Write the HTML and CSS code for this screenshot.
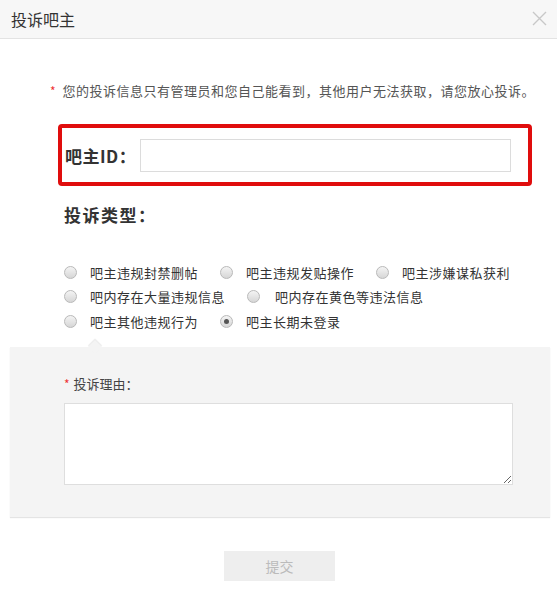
FILE: index.html
```html
<!DOCTYPE html>
<html lang="zh-CN">
<head>
<meta charset="utf-8">
<title>投诉吧主</title>
<link rel="stylesheet" href="styles.css">
</head>
<body>
<div class="dialog">
  <header class="dlg-head">
    <span class="dlg-title">投诉吧主</span>
    <span class="dlg-close" aria-label="关闭">
      <svg width="15" height="15" viewBox="0 0 15 15"><path d="M1 1 L14 14 M14 1 L1 14" stroke="#c8c8c8" stroke-width="1.4" fill="none"/></svg>
    </span>
  </header>

  <p class="notice"><span class="req">*</span>您的投诉信息只有管理员和您自己能看到，其他用户无法获取，请您放心投诉。</p>

  <div class="id-box">
    <label class="id-label">吧主ID：</label>
    <input class="id-input" type="text">
  </div>

  <h3 class="type-title">投诉类型：</h3>

  <ul class="radio-list">
    <li class="radio-item"><span class="radio"></span><span class="radio-text">吧主违规封禁删帖</span></li>
    <li class="radio-item"><span class="radio"></span><span class="radio-text">吧主违规发贴操作</span></li>
    <li class="radio-item"><span class="radio"></span><span class="radio-text">吧主涉嫌谋私获利</span></li>
    <li class="radio-item"><span class="radio"></span><span class="radio-text">吧内存在大量违规信息</span></li>
    <li class="radio-item"><span class="radio"></span><span class="radio-text wide">吧内存在黄色等违法信息</span></li>
    <li class="radio-item"><span class="radio"></span><span class="radio-text">吧主其他违规行为</span></li>
    <li class="radio-item"><span class="radio checked"></span><span class="radio-text">吧主长期未登录</span></li>
  </ul>

  <section class="reason-panel">
    <div class="reason-label"><span class="req">*</span>投诉理由：</div>
    <textarea class="reason-input"></textarea>
  </section>

  <div class="actions">
    <button class="submit" type="button">提交</button>
  </div>
</div>
</body>
</html>
```

FILE: styles.css
```css
html, body {
  margin: 0;
  padding: 0;
  background: #fff;
}

body {
  font-family: "Noto Sans CJK SC", "Microsoft YaHei", sans-serif;
  color: #333;
}

.dialog {
  width: 557px;
  height: 593px;
  overflow: hidden;
}

.dlg-head {
  height: 38px;
  background: #f7f7f7;
  border-bottom: 1px solid #e3e3e3;
  display: flex;
  align-items: center;
  justify-content: space-between;
  padding: 0 10px 0 11px;
}

.dlg-title {
  font-size: 16px;
  color: #333;
  line-height: 20px;
}

.dlg-close {
  display: flex;
  margin-top: -2px;
}

.notice {
  margin: 42px 0 0 50px;
  font-size: 13px;
  line-height: 20px;
  color: #555;
  letter-spacing: 0.5px;
}

.req {
  color: #e33;
  font-size: 12px;
  margin-right: 7px;
  letter-spacing: 0;
}

.id-box {
  margin: 23px 0 0 58px;
  width: 463px;
  height: 54px;
  border: 4px solid #e00d0d;
  border-radius: 4px;
  display: flex;
  align-items: center;
  padding-left: 3px;
}

.id-label {
  font-size: 17px;
  font-weight: bold;
  color: #333;
  width: 75px;
  letter-spacing: 0.5px;
}

.id-input {
  width: 369px;
  height: 31px;
  border: 1px solid #dcdcdc;
  margin: 0;
  padding: 0;
  outline: none;
}

.type-title {
  margin: 16px 0 0 64px;
  font-size: 17px;
  font-weight: bold;
  line-height: 26px;
  color: #333;
  letter-spacing: 1.5px;
}

.radio-list {
  list-style: none;
  margin: 32px 0 0 64px;
  padding: 0;
  width: 458px;
  display: flex;
  flex-wrap: wrap;
  column-gap: 22px;
}

.radio-item {
  display: flex;
  align-items: center;
  height: 24.5px;
  font-size: 13px;
  letter-spacing: 0.5px;
  color: #333;
}

.radio {
  width: 11px;
  height: 11px;
  border: 1px solid #b9b9b9;
  border-radius: 50%;
  background: linear-gradient(#f4f4f4, #d6d6d6);
  margin-right: 13px;
  position: relative;
}

.radio.checked::after {
  content: "";
  position: absolute;
  left: 3px;
  top: 3px;
  width: 5px;
  height: 5px;
  border-radius: 50%;
  background: #555;
}

.radio-text.wide {
  margin-left: 2px;
}

.reason-panel {
  margin: 13px 7px 0 10px;
  height: 170px;
  background: #f4f4f4;
  box-shadow: 0 1px 1px #e4e4e4;
  position: relative;
  padding: 27px 0 0 54px;
  box-sizing: border-box;
}

.reason-panel::before {
  content: "";
  position: absolute;
  left: 80px;
  top: -5px;
  width: 10px;
  height: 10px;
  background: #f4f4f4;
  transform: rotate(45deg);
  box-shadow: -1px -1px 1px #eaeaea;
}

.reason-label {
  font-size: 13px;
  line-height: 20px;
  color: #444;
}

.reason-label .req {
  margin-right: 4px;
}

.reason-input {
  display: block;
  margin-top: 9px;
  width: 449px;
  height: 82px;
  box-sizing: border-box;
  border: 1px solid #dedede;
  background: #fff;
  resize: both;
  outline: none;
}

.actions {
  display: flex;
  justify-content: center;
  padding-top: 34px;
}

.submit {
  width: 111px;
  height: 30px;
  border: none;
  background: #eee;
  color: #bbb;
  font-size: 14px;
  font-family: inherit;
  padding: 0;
  margin: 0 0 0 2px;
}
```
